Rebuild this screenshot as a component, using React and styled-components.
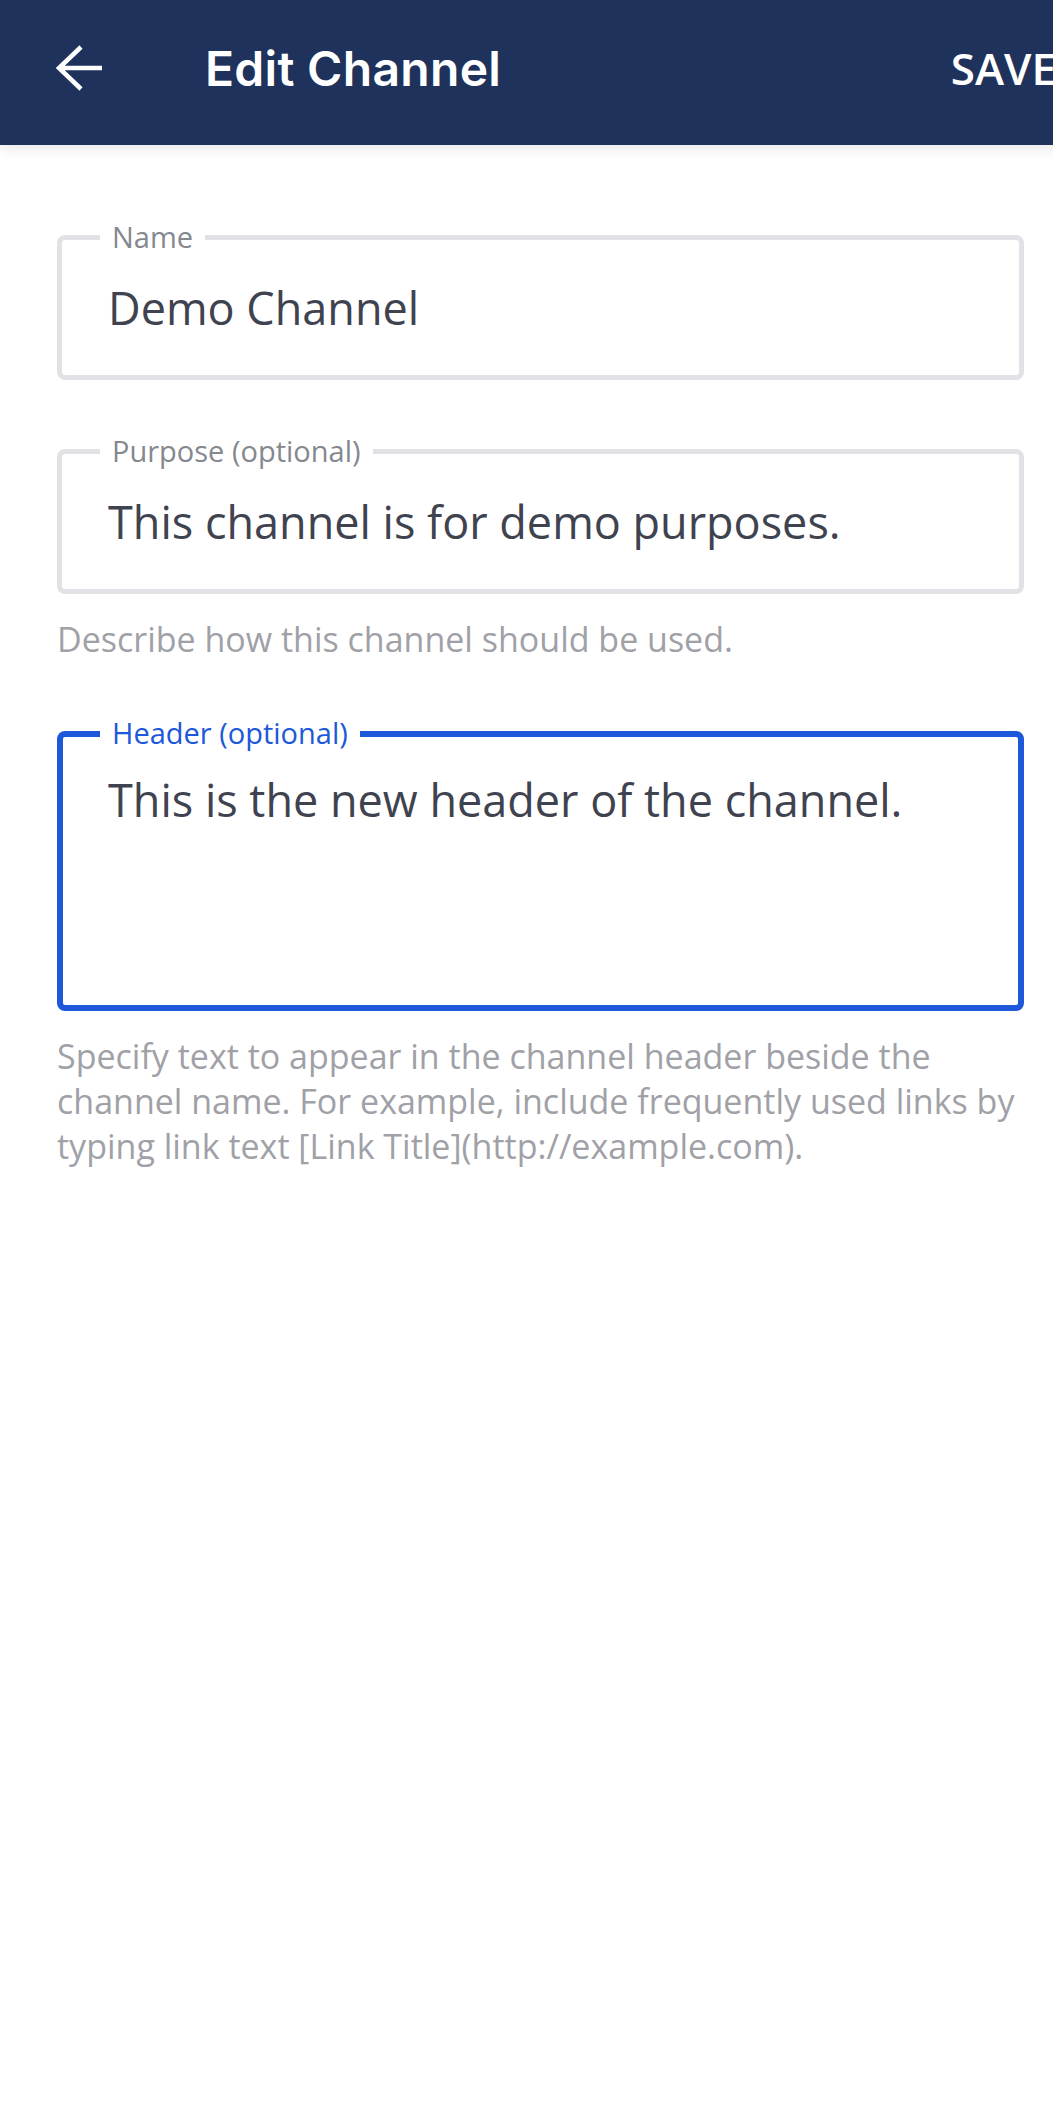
import styled, { createGlobalStyle } from "styled-components";

const GlobalStyle = createGlobalStyle`
    html, body {
        margin: 0;
        padding: 0;
        background: #fff;
        overflow-x: hidden;
    }
    * {
        box-sizing: border-box;
    }
`;

const Screen = styled.div`
    width: 1080px;
    min-height: 2110px;
    background: #fff;
    font-family: "Open Sans", "Noto Sans", sans-serif;
`;

const Header = styled.div`
    position: relative;
    z-index: 1;
    height: 145px;
    background: #1e325c;
    display: flex;
    align-items: center;
    padding: 0 24px 9px 54px;
    box-shadow: 0 4px 14px rgba(0, 0, 0, 0.09);
`;

const BackButton = styled.button`
    width: 48px;
    height: 48px;
    padding: 0;
    border: none;
    background: transparent;
    display: flex;
    cursor: pointer;
`;

const Title = styled.h1`
    flex: 1;
    margin: 0 0 0 103px;
    color: #fff;
    font-family: Inter, "Open Sans", sans-serif;
    font-weight: 600;
    font-size: 48px;
    letter-spacing: 0.3px;
`;

const SaveButton = styled.span`
    color: #fff;
    font-weight: 600;
    font-size: 44px;
    white-space: nowrap;
`;

const Form = styled.div`
    padding: 90px 56px 0 57px;
    display: flex;
    flex-direction: column;
`;

const FieldGroup = styled.div`
    display: flex;
    flex-direction: column;
    margin-bottom: 69px;
`;

const Field = styled.div`
    position: relative;
    height: ${(props) => (props.multiline ? "280px" : "145px")};
    border: ${(props) => (props.focused ? "6px solid #1c58d9" : "5px solid #e1e2e5")};
    border-radius: 8px;
    display: flex;
    align-items: ${(props) => (props.multiline ? "flex-start" : "center")};
    padding: ${(props) => (props.multiline ? "33px 0 0 45px" : "0 0 0 46px")};
`;

const Label = styled.span`
    position: absolute;
    top: ${(props) => (props.focused ? "-22.5px" : "-21px")};
    left: ${(props) => (props.focused ? "37px" : "38px")};
    padding: 0 12px;
    background: #fff;
    font-size: 29px;
    line-height: 36px;
    color: ${(props) => (props.focused ? "#1c58d9" : "#85888f")};
`;

const Value = styled.div`
    font-size: 45px;
    line-height: 60px;
    color: #3f4350;
    white-space: nowrap;
`;

const Helper = styled.p`
    margin: 23px 0 0;
    font-size: 34px;
    line-height: 45px;
    color: #9fa1a7;
`;

const ArrowLeft = () => (
    <svg width="48" height="48" viewBox="0 0 48 48" fill="none">
        <path
            d="M5 24 H48 M27 3 L5 24 L27 45"
            stroke="#fff"
            strokeWidth="4.5"
            strokeLinejoin="miter"
        />
    </svg>
);

const fields = [
    { label: "Name", value: "Demo Channel" },
    {
        label: "Purpose (optional)",
        value: "This channel is for demo purposes.",
        help: "Describe how this channel should be used.",
    },
    {
        label: "Header (optional)",
        value: "This is the new header of the channel.",
        help: "Specify text to appear in the channel header beside the channel name. For example, include frequently used links by typing link text [Link Title](http://example.com).",
        multiline: true,
        focused: true,
    },
];

const App = () => {
    return (
        <Screen>
            <GlobalStyle />
            <Header>
                <BackButton aria-label="Back">
                    <ArrowLeft />
                </BackButton>
                <Title>Edit Channel</Title>
                <SaveButton>SAVE</SaveButton>
            </Header>
            <Form>
                {fields.map((f) => (
                    <FieldGroup key={f.label}>
                        <Field multiline={f.multiline} focused={f.focused}>
                            <Label focused={f.focused}>{f.label}</Label>
                            <Value>{f.value}</Value>
                        </Field>
                        {f.help && <Helper>{f.help}</Helper>}
                    </FieldGroup>
                ))}
            </Form>
        </Screen>
    );
};

export default App;
